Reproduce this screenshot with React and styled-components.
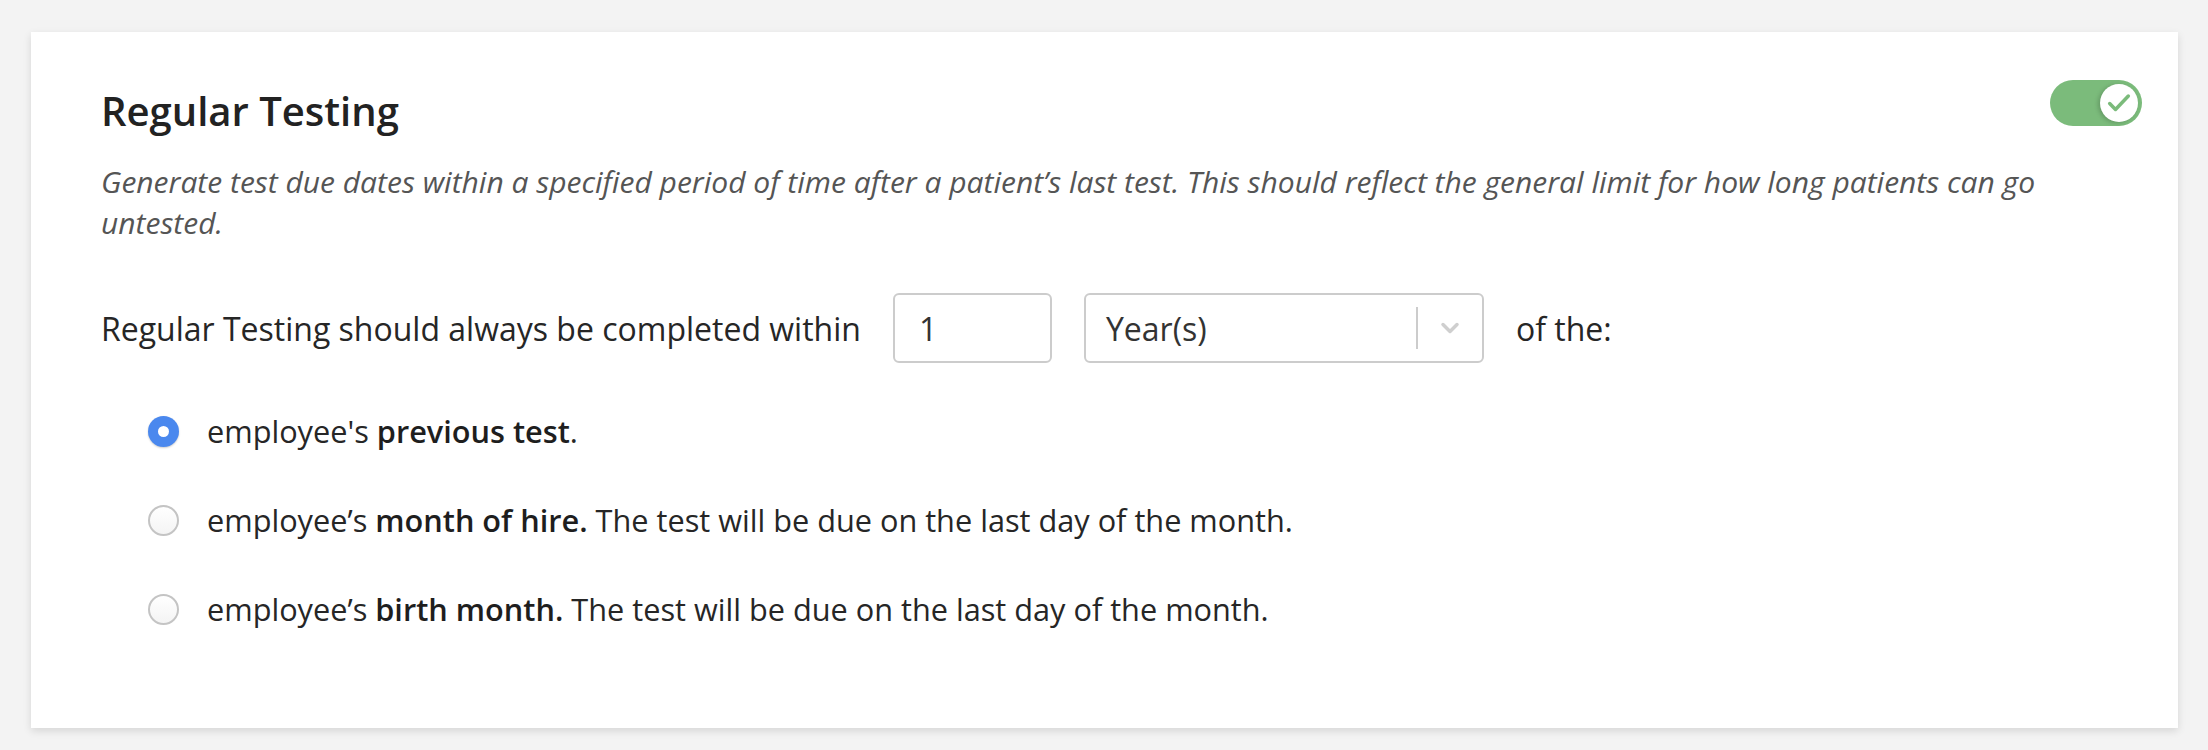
import React from "react";
import styled, { createGlobalStyle } from "styled-components";

const GlobalStyle = createGlobalStyle`
    html, body {
        margin: 0;
        padding: 0;
        background: #f3f3f3;
        font-family: "Open Sans", "Liberation Sans", sans-serif;
        color: #222;
    }
`;

const Page = styled.div`
    box-sizing: border-box;
    width: 2208px;
    height: 750px;
    padding: 32px 30px 22px 31px;
`;

const Card = styled.section`
    box-sizing: border-box;
    height: 696px;
    background: #fff;
    box-shadow: 0 3px 8px rgba(0, 0, 0, .12);
    padding: 52px 70px 0 70px;
`;

const Header = styled.div`
    display: flex;
    justify-content: space-between;
    align-items: flex-start;
`;

const Title = styled.h2`
    margin: 0;
    font-size: 40px;
    line-height: 54px;
    font-weight: 600;
    color: #222;
`;

const Toggle = styled.div`
    position: relative;
    width: 92px;
    height: 46px;
    margin-top: -4px;
    margin-right: -34px;
    border-radius: 23px;
    background: ${ p => p.$on ? "#7bbb7b" : "#ccc" };
`;

const Knob = styled.div`
    position: absolute;
    top: 4px;
    ${ p => p.$on ? "right: 4px;" : "left: 4px;" }
    width: 38px;
    height: 38px;
    border-radius: 50%;
    background: #fff;
    box-shadow: -2px 1px 4px rgba(0, 0, 0, .18);
    display: flex;
    align-items: center;
    justify-content: center;
`;

const Description = styled.p`
    margin: 23px 0 0 0;
    font-size: 30px;
    line-height: 41px;
    font-style: italic;
    color: #555;
`;

const Row = styled.div`
    display: flex;
    align-items: center;
    gap: 32px;
    margin-top: 50px;
    font-size: 32px;
    color: #262626;
`;

const NumberInput = styled.div`
    box-sizing: border-box;
    width: 159px;
    height: 70px;
    border: 2px solid #ccc;
    border-radius: 6px;
    padding-left: 24px;
    display: flex;
    align-items: center;
    font-size: 32px;
    color: #333;
`;

const Select = styled.div`
    box-sizing: border-box;
    width: 400px;
    height: 70px;
    border: 2px solid #ccc;
    border-radius: 6px;
    display: flex;
    align-items: center;
    font-size: 32px;
    color: #333;
`;

const SelectValue = styled.span`
    flex: 1;
    padding-left: 20px;
`;

const Divider = styled.span`
    width: 2px;
    height: 42px;
    background: #ccc;
`;

const Chevron = styled.span`
    width: 64px;
    display: flex;
    align-items: center;
    justify-content: center;
`;

const Options = styled.div`
    display: flex;
    flex-direction: column;
    gap: 47px;
    margin-top: 47px;
    padding-left: 47px;
`;

const Option = styled.label`
    display: flex;
    align-items: center;
    gap: 28px;
    font-size: 30.7px;
    line-height: 42px;
    color: #262626;
`;

const Radio = styled.span`
    box-sizing: border-box;
    width: 31px;
    height: 31px;
    border-radius: 50%;
    flex-shrink: 0;
    display: flex;
    align-items: center;
    justify-content: center;
    ${ p => p.$checked ? `
        background: #4a88ee;
        border: none;
        box-shadow: 0 1px 2px rgba(0, 0, 0, .2);
        &::after {
            content: '';
            width: 11px;
            height: 11px;
            border-radius: 50%;
            background: #fff;
        }
    ` : `
        background: linear-gradient(#fff, #f4f4f4);
        border: 2px solid #c4c4c4;
    ` }
`;

const Strong = styled.b`
    font-weight: 600;
    color: #1e1e1e;
`;

const options = [
    { id: "previous", checked: true, content: <>employee's <Strong>previous test</Strong>.</> },
    { id: "hire", content: <>employee’s <Strong>month of hire.</Strong> The test will be due on the last day of the month.</> },
    { id: "birth", content: <>employee’s <Strong>birth month.</Strong> The test will be due on the last day of the month.</> },
];

export default function App() {
    return (
        <Page>
            <GlobalStyle/>
            <Card>
                <Header>
                    <Title>Regular Testing</Title>
                    <Toggle $on>
                        <Knob $on>
                            <svg width="28" height="28" viewBox="0 0 24 24" fill="none" stroke="#7bbb7b" strokeWidth="3" strokeLinecap="round" strokeLinejoin="round">
                                <path d="M4 12.5l5 5L20 6"/>
                            </svg>
                        </Knob>
                    </Toggle>
                </Header>
                <Description>
                    Generate test due dates within a specified period of time after a patient’s last test. This should reflect the general limit for how long patients can go untested.
                </Description>
                <Row>
                    <span>Regular Testing should always be completed within</span>
                    <NumberInput>1</NumberInput>
                    <Select>
                        <SelectValue>Year(s)</SelectValue>
                        <Divider/>
                        <Chevron>
                            <svg width="20" height="14" viewBox="0 0 20 14" fill="none" stroke="#cfcfcf" strokeWidth="3.5" strokeLinecap="round" strokeLinejoin="round">
                                <path d="M3 3.5l7 7 7-7"/>
                            </svg>
                        </Chevron>
                    </Select>
                    <span>of the:</span>
                </Row>
                <Options>
                    { options.map(o => (
                        <Option key={ o.id }>
                            <Radio $checked={ o.checked }/>
                            <span>{ o.content }</span>
                        </Option>
                    )) }
                </Options>
            </Card>
        </Page>
    );
}
